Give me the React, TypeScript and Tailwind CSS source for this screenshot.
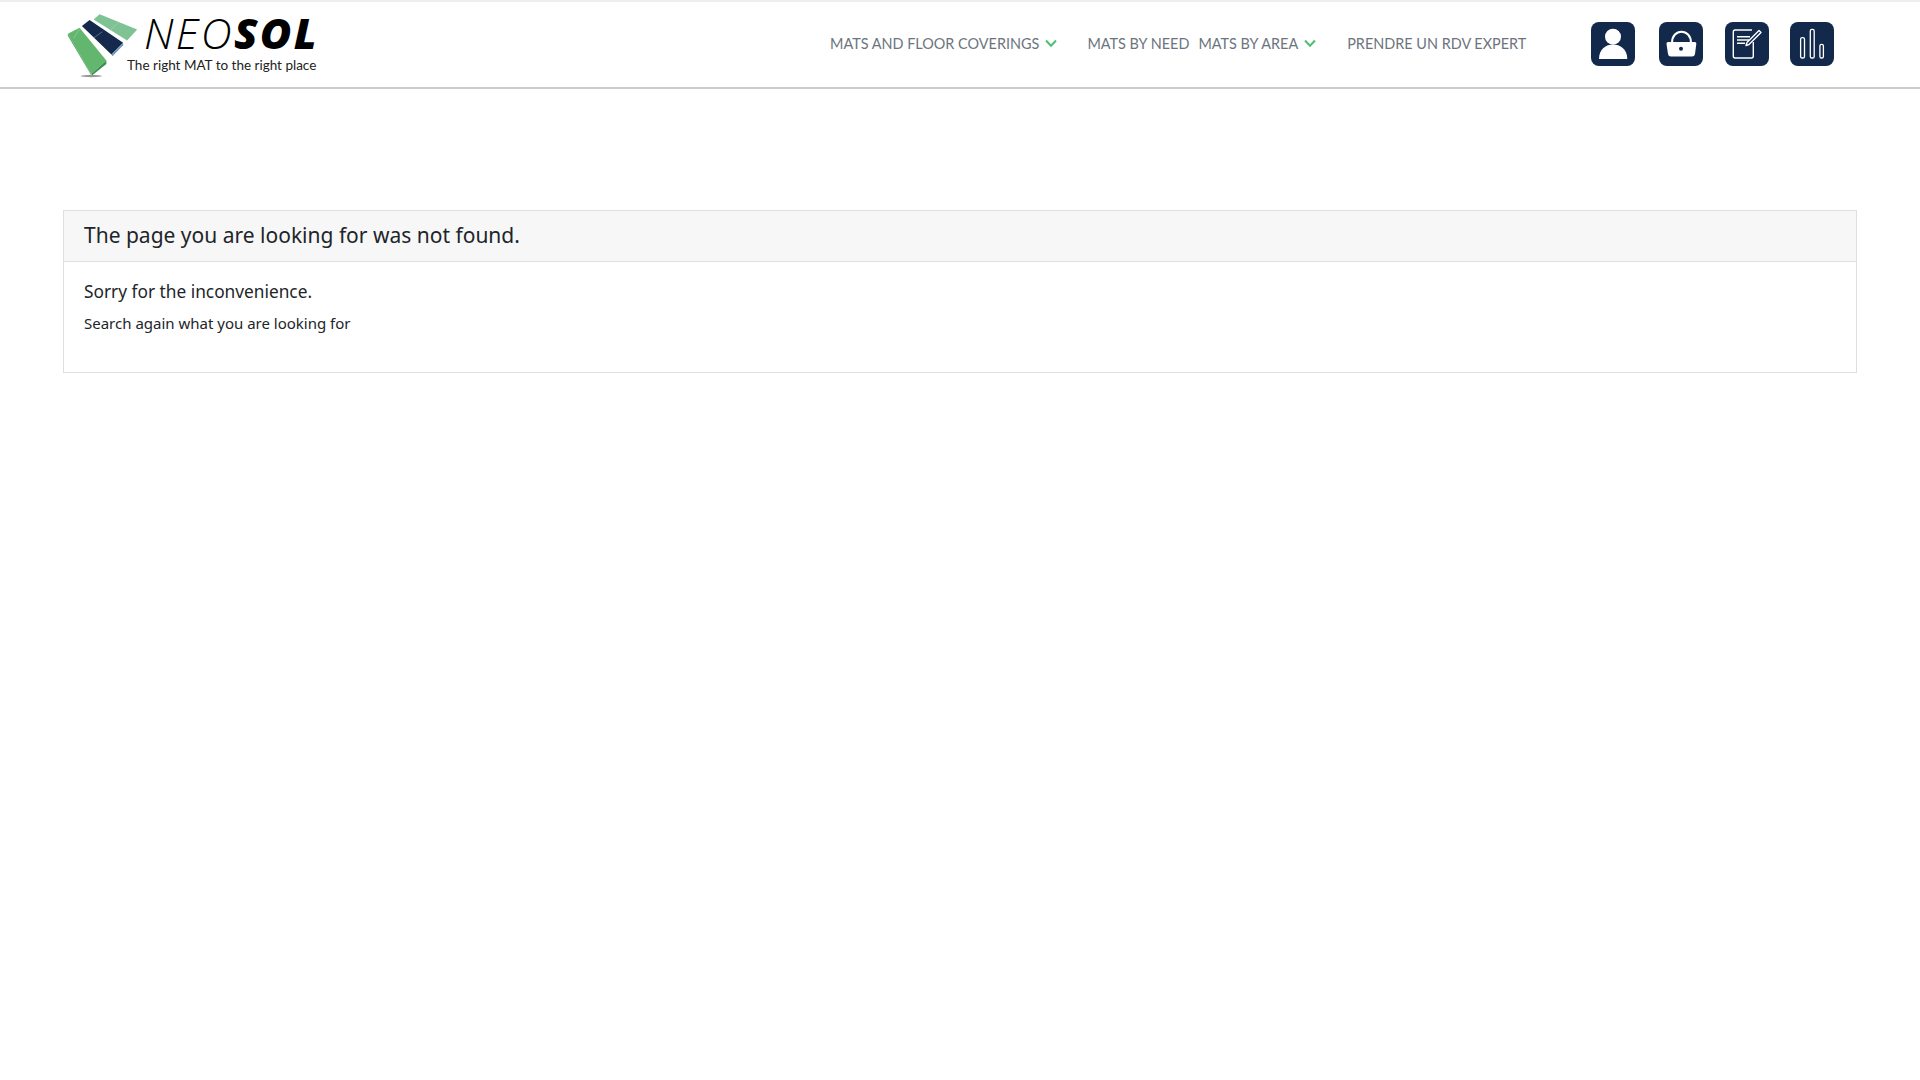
const nav = "font-['Lato','Liberation_Sans',sans-serif] text-[14.45px] text-[#6c757d] whitespace-nowrap";

function Chevron() {
  return (
    <svg width="12" height="9" viewBox="0 0 12 9" className="ml-[6px] shrink-0">
      <path d="M1 1.5 L6 6.8 L11 1.5" fill="none" stroke="#4fbf73" strokeWidth="2" />
    </svg>
  );
}

function Logo() {
  return (
    <div className="flex items-start w-[268px] h-[70px]">
      <svg width="74" height="67" viewBox="50 30 220 200" className="shrink-0 mt-[2px] mr-[5px]">
        <ellipse cx="125" cy="224" rx="32" ry="3.5" fill="#555" opacity="0.6" />
        <polygon points="55,98 90,80 170,178 125,218" fill="#62b66d" />
        <polygon points="55,98 55,104 125,222 125,218" fill="#4fa45c" />
        <polygon points="125,218 170,178 170,188 128,222" fill="#3d8f4b" />
        <polygon points="97,75 120,57 220,125 185,160" fill="#15294d" />
        <polygon points="185,160 220,125 220,132 188,165" fill="#6d93b5" />
        <polygon points="132,55 150,40 262,85 232,118" fill="#7fc294" />
        <path d="M90 84 L72 112 M158 92 L130 112 M205 65 L180 90" stroke="#cfe8d5" strokeWidth="1.5" opacity="0.7" />
      </svg>
      <div className="flex flex-col">
        <div className="font-['Open_Sans','Liberation_Sans',sans-serif] italic text-[43px] tracking-[2.3px] leading-[40px] text-black ml-[-1px] mt-[4px] whitespace-nowrap">
          <span className="font-light">NEO</span>
          <span className="font-extrabold">SOL</span>
        </div>
        <div className="font-['Lato','Liberation_Sans',sans-serif] text-[13.5px] leading-[16px] text-[#222] ml-[-18px] mt-[4px] whitespace-nowrap">
          The right MAT to the right place
        </div>
      </div>
    </div>
  );
}

function IconBox({ children, className }: { children: React.ReactNode; className: string }) {
  return (
    <div className={"w-[44px] h-[44px] rounded-[8px] bg-[#12294b] shrink-0 " + className}>
      <svg width="44" height="44" viewBox="0 0 44 44">{children}</svg>
    </div>
  );
}

export default function App() {
  return (
    <div className="min-h-[1080px] bg-white">
      <header className="h-[89px] border-t-[2px] border-t-[#eeeeee] border-b-[2px] border-b-[#cccccc] flex items-center pl-[66px] pb-[1px]">
        <Logo />
        <nav className="flex items-center ml-[496px]">
          <span className={nav}>MATS AND FLOOR COVERINGS</span>
          <Chevron />
          <span className={nav + " ml-[30px]"}>MATS BY NEED</span>
          <span className={nav + " ml-[9px]"}>MATS BY AREA</span>
          <Chevron />
          <span className={nav + " ml-[31px]"}>PRENDRE UN RDV EXPERT</span>
        </nav>
        <div className="flex items-center ml-[65px]">
          <IconBox className="">
            <circle cx="22" cy="14.7" r="8" fill="#fff" />
            <path d="M8 37 C8 27 15 22.5 22 22.5 C29 22.5 36.3 27 36.3 37 Z" fill="#fff" />
          </IconBox>
          <IconBox className="ml-[24px]">
            <path d="M13 21 C13 6 32 6 32 21" fill="none" stroke="#fff" strokeWidth="2" />
            <path d="M9 20 H36 Q37.5 20 37.3 22 L36 32 Q35.7 34.5 33 34.5 H12 Q9.3 34.5 9 32 L7.5 22 Q7.3 20 9 20 Z" fill="#fff" />
            <circle cx="22" cy="26.7" r="2" fill="#12294b" />
          </IconBox>
          <IconBox className="ml-[22px]">
            <path d="M27 8 H10 Q8.3 8 8.3 10 V34 Q8.3 36 10 36 H26.5 Q28.3 36 28.3 34 V20" fill="none" stroke="#fff" strokeWidth="1.4" />
            <path d="M12 14.7 H25 M12 18 H24 M12 21.3 H20" stroke="#fff" strokeWidth="1.4" />
            <path d="M34 8.5 L36 10.5 L24 22.5 L21 23.5 L22 20.5 Z" fill="none" stroke="#fff" strokeWidth="1.4" strokeLinejoin="round" />
          </IconBox>
          <IconBox className="ml-[21px]">
            <rect x="10.6" y="15.7" width="3.9" height="20.3" rx="1.6" fill="none" stroke="#fff" strokeWidth="1.3" />
            <rect x="20.3" y="7.3" width="3.9" height="28.7" rx="1.6" fill="none" stroke="#fff" strokeWidth="1.3" />
            <rect x="29.9" y="22.3" width="3.5" height="13.7" rx="1.6" fill="none" stroke="#fff" strokeWidth="1.3" />
          </IconBox>
        </div>
      </header>
      <main className="px-[63px] pt-[121px]">
        <section className="border border-[#dfdfdf] font-['Noto_Sans','Liberation_Sans',sans-serif] text-[#212529]">
          <div className="h-[51px] bg-[#f7f7f7] border-b border-[#dfdfdf] px-[20px] flex items-center text-[21px]">
            The page you are looking for was not found.
          </div>
          <div className="h-[110px] px-[20px] pt-[17px]">
            <p className="text-[17.3px] leading-[26px]">Sorry for the inconvenience.</p>
            <p className="text-[15px] leading-[22px] mt-[7px]">Search again what you are looking for</p>
          </div>
        </section>
      </main>
    </div>
  );
}
